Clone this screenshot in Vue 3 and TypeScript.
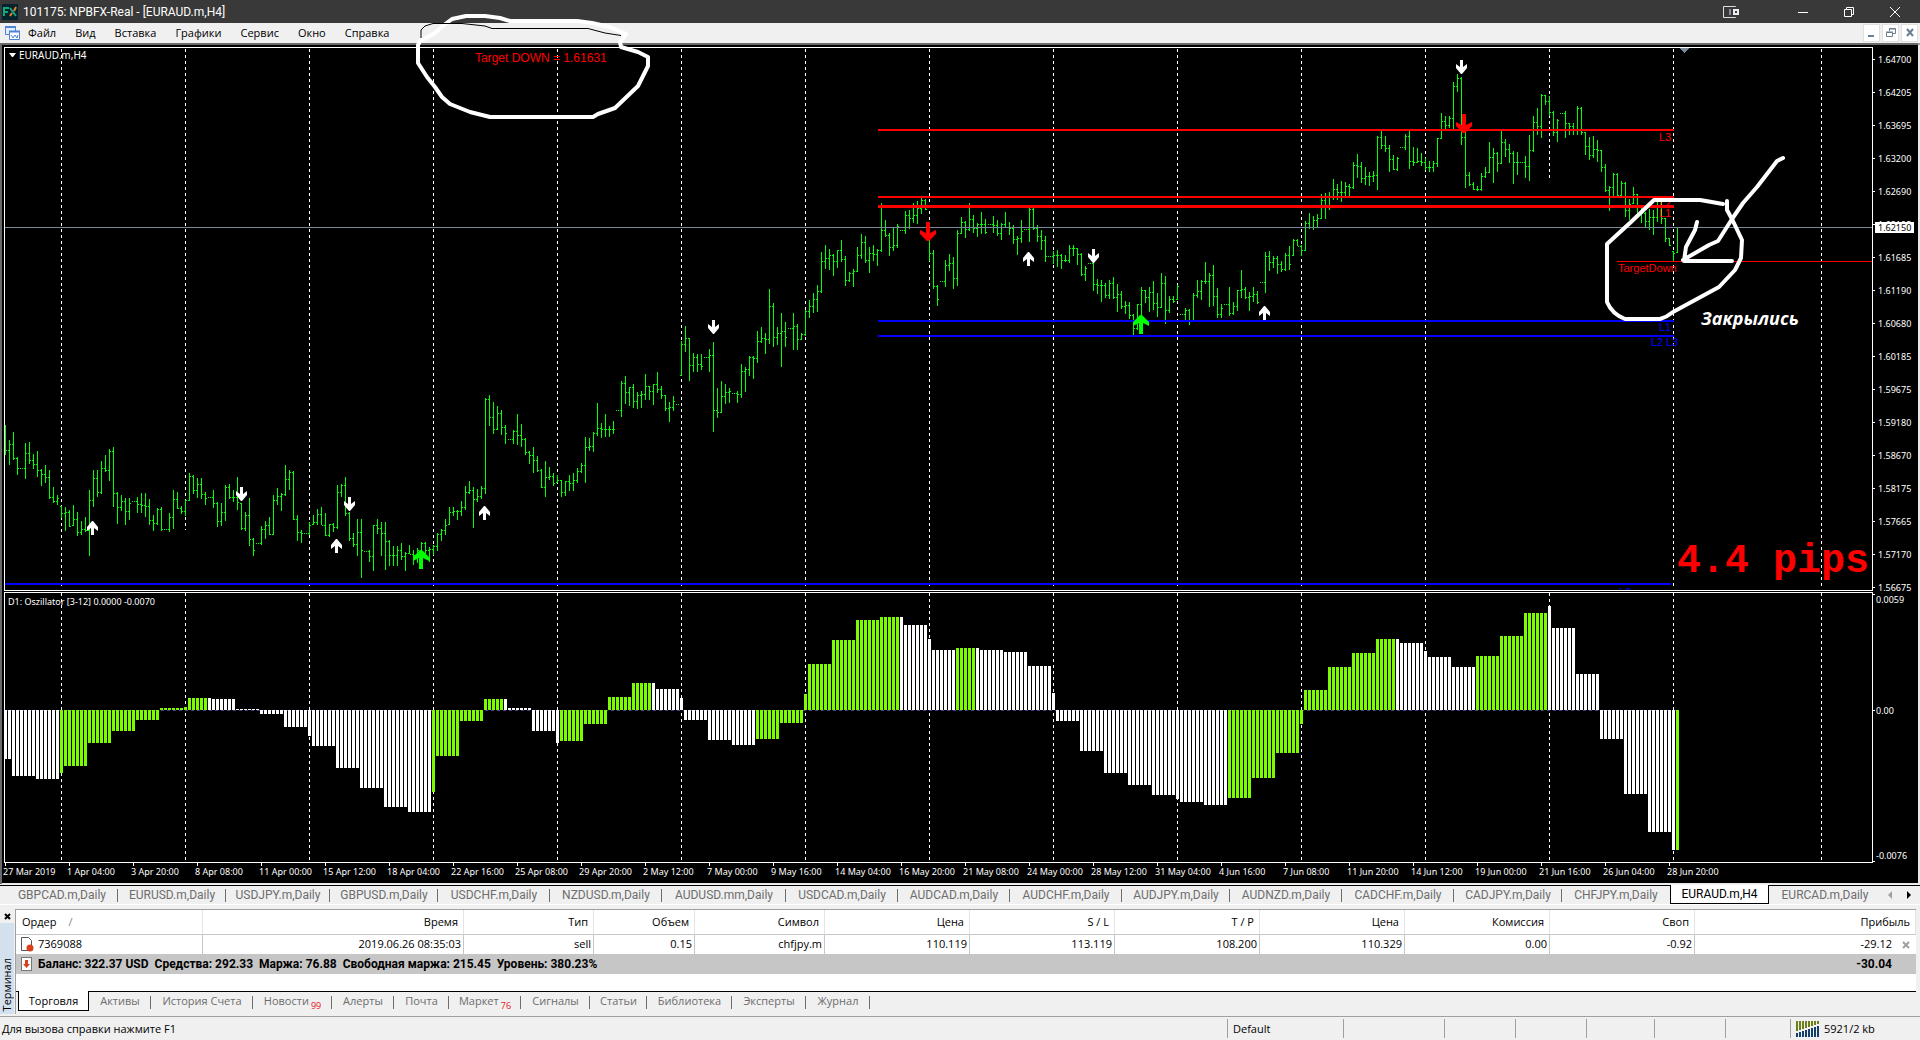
<script setup lang="ts">
interface Block {
  /* first bar index and vertical origin; heights are thirds of a pixel below it */
  start: number
  base: number
  data: string
}

/* bars are "high,low,close" or a single value for a flat bar */
const blocks: Block[] = [
  {
    start: 0,
    base: 400,
    data:
      '75,165,151 121,197,134 96,182,175 172,225,205 205 130,237,160 126,192,182 163,207,192 153,231,211 207,258,222 195,250,232 ' +
      '210,297,292 261,310,303 285,315,295 320,355,340 323,395,337 330,383,378 315,380,358 337,410,397 365,405,387 353,398,392 ' +
      '270,470,301 210,323,236 210,292,277 185,282,205 165,218,211 147,244,155 143,321,280 278,372,322 285,333,303 294,377,333 ' +
      '294,362,309 304 292,340,312 280,340,317 280,353,320 297,375,362 345,395,370 325,375,328 321,393,388 388 ' +
      '340,396,351 272,387,297 278,328,325 320,342,334 300,348,300 219,303,228 225,282,271 234,295,253 234,297,283 278,317,295 ' +
      '292 270,324,310 308,383,363 309,380,338 255,365,262 252,297,292 270,308,292 231,330,308 309,392,385 336,395,345 ' +
      '295,438,418 415,470,451 430 378,435,387 365,417,375 353,407,403 285,405,300 264,315,288 280,333,284 195,289,238 ' +
      '212,272,216 214,360,357 345,423,396 390,429,400 399 368,405,375 345,375,367 327,377,343 321,377,375 339,410,407 ' +
      '372,412,373 370,398,382 255,387,277 252,292,256 231,350,340 337,425,415 401,441,433 357,470,397 359,534,451 453 ' +
      '450,487,470 375,513,377 357,402,385 368,470,400 368,510,423 420,498,467 440,498,465 438,498,450 430,481,470 457,513,461 ' +
      '435,463,463 452,495,465 445,490,450 427,470,430 428,470,452 443,487,447 435,465,440 401,453,404 388,425,392 357,405,376 ' +
      '321,376,338 321,348,335 330,362,335 303,350,321',
  },
  {
    start: 115,
    base: 260,
    data:
      '678,750,697 663,702,691 681,804,717 687,726,709 678,717,685 414,702,418 405,498,472 426,522,508 438,510,460 450,525,502 ' +
      '495,552,520 538 510,552,514 462,555,525 492,561,538 534,585,577 573,612,586 561,639,601 588,636,631 627,684,682 603,711,652 ' +
      '621,660,649 639,678,670 645,669,661 660,711,697 663,708,664 645,693,670 639,693,661 624,669,634 609,639,616 531,669,562 ' +
      '534,573,559 516,576,520 429,528,505 489,534,508 462,531,508 498,531,508 483,522,508 451 363,471,370 348,432,397 ' +
      '381,438,381 372,444,424 396,447,406 393,444,403 342,420,379 378,420,394 372,435,373 336,399,388 378,417,406 405,453,445 ' +
      '426,486,442 408,453,424 433 243,348,253 198,276,235 234,363,316 279,336,292 282,336,313 282,330,319 292 ' +
      '267,336,286 246,516,451 384,474,457 363,459,408 372,432,397 384,429,394 400 393,429,403 312,414,334 321,396,328 ' +
      '288,348,292 288,357,295 213,309,244 201,249,235 219,282,238 87,252,139 129,261,232 201,255,220 159,321,214 186,261,232 ' +
      '205 159,270,199',
  },
  {
    start: 198,
    base: 180,
    data:
      '432,510,478 459,480,462 390,468,393 360,414,380 339,399,358 315,396,335 216,339,244 195,267,235 207,270,227 222,288,244 ' +
      '210,264,211 180,246,238 228,318,301 276,306,280 267,321,274 201,276,226 162,237,187 168,249,241 201,279,220 195,243,223 ' +
      '207,258,211 69,216,151 120,171,166 159,228,202 141,213,196 132,204,138 150 93,162,106 90,147,115 69,129,106 63,132,85 ' +
      '48,102,61 57,90,88 180,243,220 210,327,319 315,378,358 304 240,321,255 222,273,250 231,327,295 150,318,160 111,162,127 ' +
      '123,174,148 69,153,118 105,159,144 129,171,133 96,162,133 117,162,157 133 108,159,135 120,168,160 129,180,133 96,144,142 ' +
      '127,165,144 135,192,178 168,225,175 120,189,153 148 78,186,88 84,150,145 135,186,169 150,210,181 168,246,229 228 ' +
      '213,252,227 210,261,226 222,267,241 225,246,241 195,249,205 195,228,205 204,255,223 219,288,283 258,303,265 250 ' +
      '246,333,313 297,342,316 300,366,316 309,354,346 300,357,310 291,357,352 312,396,343 333,388,379 363,402,376 366,417,406 ' +
      '402,468,445 372,450,373 321,420,331 330,369,352 321,396,337 303,390,370 339,411,382 279,384,310 288,432,391 348,399,358 ' +
      '348,369,364 315,360,319 403 384,426,391 387,435,424 339,426,346 300,354,334 300,360,304 246,312,304 279,381,286 ' +
      '255,378,349 324,414,403 372,414,386 373 321,408,400 366,405,379 330,393,331 270,354,328 321,357,352 336,393,349 ' +
      '321,366,343 333,372,367 307 216,339,229 213,273,247 228,264,235 228,282,253',
  },
  {
    start: 319,
    base: 0,
    data:
      '785,817,808 759,815,765 738,812,793 717,768,720 717,740,738 735,768,750 663,753,670 639,687,682 648,690,660 642,684,654 ' +
      '582,657,600 579,657,592 576,630,588 537,600,568 552,600,577 543,606,577 546,591,559 552,588,562 486,567,495 462,534,499 ' +
      '486,549,535 501,555,529 516,558,529 513,546,526 408,570,411 393,447,435 408,456,445 435,516,478 465,510,508 471,513,475 ' +
      '442 402,450,409 387,507,483 441,498,486 444,490,484 459,498,487 474,510,501 483,516,502 483,516,490 414,501,415 ' +
      '339,417,364 348,387,375 348,386,354 246,387,259 222,276,234 231,435,411 396,564,526 516,558,553 546,570,568 558,573,568 ' +
      '519,573,528 501,534,516 426,519,471 444,549,459 456,516,490 393,492,426 417,471,447 432,489,459 453,552,486 456,525,486 ' +
      '486 468,534,499 405,543,450 348,456,366 324,405,378 282,414,285 285,315,303 288,350,336 333,408,396 357,426,360 340 ' +
      '333,414,370 369,405,378 369,405,387 318,405,325 321,405,396 396,465,438 411,480,466 408,474,448 420,486,451 450,516,502 ' +
      '492,576,571 558,633,562 519,588,523 519,588,586 543,588,550 546,651,631 597,660,612 561,612,583 582,642,621 615,669,640 ' +
      '636,681,664 627,690,651 630,705,652 600,666,615 606,672,655 654,726,716 714,738,736 753,787,760 681,760,682',
  },
]

const barX = (k: number): number => 5 + 4 * k

function buildBars(): string {
  let d = ''
  let prev = 450
  for (const b of blocks) {
    b.data.split(' ').forEach((item, i) => {
      const v = item.split(',').map(n => b.base + Math.floor(Number(n) / 3))
      const x = barX(b.start + i)
      if (v.length === 1) {
        d += `M${x - 1} ${v[0]}h1v1h-1zM${x + 1} ${v[0]}h1v1h-1z`
        prev = v[0]
        return
      }
      const [hi, lo, close] = v
      const open = Math.min(Math.max(prev, hi), lo - 1)
      d += `M${x} ${hi}h1V${lo}h-1zM${x - 1} ${open}h1v1h-1zM${x + 1} ${close}h1v1h-1z`
      prev = close
    })
  }
  return d
}
const barsPath = buildBars()

/* oscillator steps: bar count, colour (w/g), height above zero */
const steps =
  '2w-49 6w-66 6w-69 1g-63 6g-56 6g-33 6g-21 6g-10 6g2 1g3 5g12 1w12 6w11 6w1 6w-4 6w-17 1w-26 6w-36 6w-58 6w-78 6w-97 6w-102 ' +
  '1g-82 6g-46 6g-11 5g11 1w11 6w2 6w-21 1w-33 6g-31 6g-14 6g13 5g27 1w27 6w21 1w12 6w-10 6w-30 6w-35 6g-29 6g-13 1g16 6g46 ' +
  '6g70 6g90 5g93 1w93 6w85 1w71 6w60 5g62 1w62 6w60 6w58 6w44 1w17 6w-11 6w-41 6w-63 6w-75 6w-85 1w-89 6w-92 6w-95 6g-88 ' +
  '6g-68 6g-43 1g-14 6g20 6g43 6g57 5g71 1w71 6w67 1w59 6w53 6w43 6g54 6g74 6g97 1w104 6w82 6w36 6w-29 6w-84 6w-122 1w-140 1g-140'

const osc = { w: '', g: '' }
let cursor = 0
for (const s of steps.split(' ')) {
  const m = /^(\d+)([wg])(-?\d+)$/.exec(s)
  if (!m) continue
  const colour = m[2] as 'w' | 'g'
  for (let i = 0; i < Number(m[1]); i++) {
    osc[colour] += `M${barX(cursor) - 1} 710h3v${-Number(m[3])}h-3z`
    cursor++
  }
}

const separators = [61, 185, 309, 433, 557, 681, 805, 929, 1053, 1177, 1301, 1425, 1549, 1673, 1821]
const sepEnd = (x: number): number => (x === 185 ? 530 : x === 1549 ? 181 : 589)

const prices = [
  '1.64700', '1.64205', '1.63695', '1.63200', '1.62690', '1.62195', '1.61685', '1.61190', '1.60680',
  '1.60185', '1.59675', '1.59180', '1.58670', '1.58175', '1.57665', '1.57170', '1.56675',
].map((label, i) => ({ label, y: 59 + 33 * i }))

const dates = [
  '27 Mar 2019', '1 Apr 04:00', '3 Apr 20:00', '8 Apr 08:00', '11 Apr 00:00', '15 Apr 12:00', '18 Apr 04:00',
  '22 Apr 16:00', '25 Apr 08:00', '29 Apr 20:00', '2 May 12:00', '7 May 00:00', '9 May 16:00', '14 May 04:00',
  '16 May 20:00', '21 May 08:00', '24 May 00:00', '28 May 12:00', '31 May 04:00', '4 Jun 16:00', '7 Jun 08:00',
  '11 Jun 20:00', '14 Jun 12:00', '19 Jun 00:00', '21 Jun 16:00', '26 Jun 04:00', '28 Jun 20:00',
]

const smallDown = '0h3v7l4 -3v4l-5 6h-1l-5 -6v-4l4 3z'
const downs = [[241, 487], [349, 497], [713, 320], [1093, 249], [1461, 60]]
const ups = [[92, 521], [336, 539], [484, 506], [1028, 252], [1264, 306]]
const resist = [
  { y: 130, h: 2 },
  { y: 197, h: 2 },
  { y: 206, h: 3 },
]

const menu = ['Файл', 'Вид', 'Вставка', 'Графики', 'Сервис', 'Окно', 'Справка']

const chartTabs = [
  { name: 'GBPCAD.m,Daily', w: 112 }, { name: 'EURUSD.m,Daily', w: 108 }, { name: 'USDJPY.m,Daily', w: 104 },
  { name: 'GBPUSD.m,Daily', w: 108 }, { name: 'USDCHF.m,Daily', w: 112 }, { name: 'NZDUSD.m,Daily', w: 112 },
  { name: 'AUDUSD.mm,Daily', w: 124 }, { name: 'USDCAD.m,Daily', w: 112 }, { name: 'AUDCAD.m,Daily', w: 112 },
  { name: 'AUDCHF.m,Daily', w: 112 }, { name: 'AUDJPY.m,Daily', w: 108 }, { name: 'AUDNZD.m,Daily', w: 112 },
  { name: 'CADCHF.m,Daily', w: 112 }, { name: 'CADJPY.m,Daily', w: 108 }, { name: 'CHFJPY.m,Daily', w: 108 },
  { name: 'EURAUD.m,H4', w: 99 }, { name: 'EURCAD.m,Daily', w: 112 },
]

const columns = [
  { title: 'Ордер', value: '7369088', w: 187 },
  { title: 'Время', value: '2019.06.26 08:35:03', w: 261 },
  { title: 'Тип', value: 'sell', w: 130 },
  { title: 'Объем', value: '0.15', w: 101 },
  { title: 'Символ', value: 'chfjpy.m', w: 130 },
  { title: 'Цена', value: '110.119', w: 145 },
  { title: 'S / L', value: '113.119', w: 145 },
  { title: 'T / P', value: '108.200', w: 145 },
  { title: 'Цена', value: '110.329', w: 145 },
  { title: 'Комиссия', value: '0.00', w: 145 },
  { title: 'Своп', value: '-0.92', w: 145 },
]

const terminalTabs = [
  { name: 'Торговля', w: 71, badge: '' }, { name: 'Активы', w: 62, badge: '' }, { name: 'История Счета', w: 102, badge: '' },
  { name: 'Новости', w: 79, badge: '99' }, { name: 'Алерты', w: 62, badge: '' }, { name: 'Почта', w: 55, badge: '' },
  { name: 'Маркет', w: 72, badge: '76' }, { name: 'Сигналы', w: 69, badge: '' }, { name: 'Статьи', w: 57, badge: '' },
  { name: 'Библиотека', w: 85, badge: '' }, { name: 'Эксперты', w: 74, badge: '' }, { name: 'Журнал', w: 64, badge: '' },
]
const statusCells = [101, 71, 71, 68, 71, 65]
</script>

<template>
  <div class="app">
    <header class="title">
      <svg class="logo" viewBox="0 0 16 16">
        <rect width="16" height="16" fill="#06222c" />
        <path d="M2 12V4h5M2 8h4M8 4l6 8" stroke="#12a878" stroke-width="2" fill="none" />
        <path d="M14 3l-2 4M8 12l2-3" stroke="#e8822a" stroke-width="2" fill="none" />
      </svg>
      <h1>101175: NPBFX-Real - [EURAUD.m,H4]</h1>
      <div class="winbuttons">
        <button class="wb" aria-label="Экран">
          <svg width="16" height="12" viewBox="0 0 16 12" fill="none">
            <path d="M12.5 1V.5H.5v11h12V11" stroke="#dcdce8" />
            <path d="M7 3v6" stroke="#8a8a96" stroke-width="2" />
            <rect x="11" y="4" width="4" height="4" stroke="#eee" stroke-width="2" />
          </svg>
        </button>
        <button class="wb wide" aria-label="Свернуть"><svg width="10" height="10"><path d="M0 5.5h10" stroke="#fff" /></svg></button>
        <button class="wb" aria-label="Окно">
          <svg width="10" height="10" fill="none" stroke="#fff"><path d="M.5 2.5h7v7h-7zM2.5 2.5v-2h7v7h-2" /></svg>
        </button>
        <button class="wb" aria-label="Закрыть"><svg width="10" height="10"><path d="M0 0l10 10M10 0L0 10" stroke="#fff" /></svg></button>
      </div>
    </header>

    <nav class="menu">
      <svg class="menuicon" width="15" height="14" viewBox="0 0 15 14">
        <path d="M.5.5h10v8H.5z" fill="#e4eefc" stroke="#4f83d1" />
        <path d="M0 1h11" stroke="#4f83d1" stroke-width="2" />
        <path d="M4.500 5.500h10v8h-10z" fill="#fff" stroke="#4f83d1" />
        <path d="M4 5.500h11" stroke="#4f83d1" stroke-width="2" />
        <path d="M6 9l2 3 2-3 2 3 1-3" stroke="#4f83d1" fill="none" />
      </svg>
      <button v-for="m in menu" :key="m" class="menuitem">{{ m }}</button>
      <div class="mdi">
        <button aria-label="Свернуть график"><svg width="10" height="10"><path d="M1 8h6" stroke="#6b7f92" stroke-width="2" /></svg></button>
        <button aria-label="Восстановить график">
          <svg width="10" height="10" fill="none" stroke="#6b7f92"><path d="M3.500 3V.5h6v5H7M3 1h7M.5 4.500h6v4h-6zM0 4h7" /></svg>
        </button>
        <button aria-label="Закрыть график"><svg width="10" height="10"><path d="M2 1l6 7M8 1L2 8" stroke="#6b7f92" stroke-width="2" /></svg></button>
      </div>
    </nav>

    <main class="chart">
      <svg class="plot" viewBox="0 43 1920 841">
        <defs>
          <clipPath id="pricePanel"><rect x="5" y="48" width="1867" height="542" /></clipPath>
        </defs>
        <rect x="0" y="43" width="1920" height="841" fill="#a0a0a0" />
        <path d="M1 884V44H1918" stroke="#696969" fill="none" stroke-width="2" />
        <rect x="2" y="45" width="1916" height="838" fill="#000" />
        <path d="M2 883h1918v1H2zM1918 45h2v839h-2z" fill="#e8e8e8" />

        <g class="crisp">
          <g stroke="#fff" stroke-dasharray="3 3">
            <path v-for="x in separators" :key="x" :d="`M${x}.5 49V${sepEnd(x)}M${x}.5 593V860`" />
          </g>
          <path :d="barsPath" fill="#0f0" />
          <rect x="5" y="227" width="1867" height="1" fill="#778899" />
          <rect v-for="r in resist" :key="r.y" x="878" :y="r.y - 1" width="796" :height="r.h" fill="#f00" />
          <rect x="878" y="320" width="796" height="2" fill="#00f" />
          <rect x="878" y="335" width="796" height="2" fill="#00f" />
          <rect x="5" y="583" width="1666" height="2" fill="#00f" />
          <rect x="1617" y="261" width="255" height="1" fill="#f00" />
          <path d="M1680 48h9l-4 5h-1z" fill="#778899" />

          <path d="M5 710.5H1678" stroke="#483d8b" stroke-dasharray="3 3" />
          <path :d="osc.w" fill="#fff" />
          <path :d="osc.g" fill="#7cfc00" />

          <path d="M4 862.500V592.500H1872M4.500 590V47.500H1872M4 590.500H1872M4 862.500H1873M1872.500 47V591M1872.500 592V863" stroke="#fff" fill="none" />
          <path v-for="(d, i) in dates" :key="d" :d="`M${5 + 64 * i}.5 863v3`" stroke="#fff" />
          <path v-for="p in prices" :key="p.label" :d="`M1873 ${p.y}.5h2`" stroke="#fff" />
          <path d="M1873 594.500h2M1873 710.500h2M1873 861.500h2" stroke="#fff" />
        </g>

        <g fill="#fff">
          <path v-for="a in downs" :key="a[0]" :d="`M${a[0] - 1} ${a[1]}m0 ${smallDown}`" />
          <path v-for="a in ups" :key="a[0]" :transform="`translate(${a[0]} ${a[1]}) scale(1 -1)`" :d="`M-1 -14m0 ${smallDown}`" />
        </g>
        <path v-for="a in [[928, 222], [1464, 114]]" :key="a[0]" :d="`M${a[0] - 2} ${a[1]}h4v11l6 -3v4l-7 7h-2l-7 -7v-4l6 3z`" fill="#f00" />
        <path v-for="a in [[421, 569], [1141, 334]]" :key="a[0]" :d="`M${a[0] - 2} ${a[1]}h4v-11l6 3v-4l-7 -7h-2l-7 7v4l6 -3z`" fill="#0f0" />

        <path d="M9 53h7l-3 4h-1z" fill="#fff" />
        <text class="t10 w" x="19" y="59">EURAUD.m,H4</text>
        <text class="t9 w" x="8" y="605">D1: Oszillator [3-12] 0.0000 -0.0070</text>
        <text class="a12 r" x="475" y="62">Target DOWN = 1.61631</text>
        <text class="a11 r" x="1659" y="141">L3</text>
        <text class="a11 r" x="1659" y="207">L2</text>
        <text class="a11 r" x="1659" y="217">L1</text>
        <text class="a11 r" x="1618" y="272">TargetDown</text>
        <text class="a11 b" x="1659" y="331">L1</text>
        <text class="a11 b" x="1651" y="346">L2</text>
        <text class="a11 b" x="1666" y="346">L3</text>
        <g clip-path="url(#pricePanel)"><text class="a11 b" x="1619" y="596">L2</text></g>
        <text class="pips" x="1677" y="572">4.4 pips</text>
        <text class="note" x="1701" y="325">Закрылись</text>

        <g class="t9 w">
          <text v-for="p in prices" :key="p.label" x="1878" :y="p.y + 4">{{ p.label }}</text>
          <text x="1876" y="603">0.0059</text>
          <text x="1876" y="714">0.00</text>
          <text x="1876" y="859">-0.0076</text>
          <text v-for="(d, i) in dates" :key="d" :x="3 + 64 * i" y="875">{{ d }}</text>
        </g>
        <rect x="1875" y="222" width="39" height="11" fill="#fff" />
        <text class="t9" x="1878" y="231">1.62150</text>

        <g fill="none" stroke="#fff" stroke-width="4" stroke-linejoin="round" stroke-linecap="round">
          <path d="M626 34L610 27L592 23L577 21H510L500 18L485 16H466L452 19L444 25L435 33L420 41L418 45V63L427 77L435 87L442 97L450 104L470 112L490 117H593L598 114L615 108L638 86L648 66V57L638 52L621 47L620 42Z" />
          <path d="M1723 204L1706 201L1700 200H1654L1631 222L1607 244V302Q1612 314 1625 319H1660Q1667 317 1673 312L1719 287L1735 270L1741 258L1742 240L1732 219L1727 210V201" />
          <path d="M1783 158L1777 161L1757 187L1743 203L1732 219L1718 241L1709 245L1683 260M1732 261H1684L1686 247L1695 230L1697 222" />
        </g>
        <path d="M421 38V30L425 26L433 23.500H462L485 26L492 28.500H588L605 33L621 35.500" fill="none" stroke="#000" />
      </svg>
    </main>

    <nav class="charttabs">
      <button v-for="t in chartTabs" :key="t.name" :class="{ active: t.name === 'EURAUD.m,H4' }" :style="{ width: t.w + 'px' }">
        {{ t.name }}
      </button>
      <span class="scroll"><i class="left"></i><i class="right"></i></span>
    </nav>

    <section class="terminal">
      <aside>
        <button class="x" aria-label="Закрыть терминал"><svg width="7" height="7"><path d="M1 1l5 5M6 1L1 6" stroke="#000" stroke-width="2" /></svg></button>
        <div class="side"><span>Терминал</span></div>
      </aside>
      <div class="body">
        <table>
          <colgroup>
            <col v-for="(c, i) in columns" :key="i" :style="{ width: c.w + 'px' }" />
            <col />
          </colgroup>
          <thead>
            <tr>
              <th v-for="(c, i) in columns" :key="i">{{ c.title }}<span v-if="i === 0" class="sort">/</span></th>
              <th>Прибыль</th>
            </tr>
          </thead>
          <tbody>
            <tr class="order">
              <td v-for="(c, i) in columns" :key="i">
                <svg v-if="i === 0" class="doc" width="14" height="16" viewBox="0 0 14 16">
                  <path d="M1.500 1.500h7l3 3v10h-10z" fill="#fff" stroke="#555" />
                  <circle cx="10" cy="12" r="3.500" fill="#d8401a" />
                </svg>{{ c.value }}
              </td>
              <td class="profit">-29.12<svg width="8" height="8"><path d="M1 1l6 6M7 1L1 7" stroke="#a0a0a0" stroke-width="2" /></svg></td>
            </tr>
            <tr class="balance">
              <td colspan="11">
                <svg class="doc" width="14" height="16" viewBox="0 -1 14 16">
                  <rect x="1.500" y=".5" width="10" height="13" fill="#fff" stroke="#777" />
                  <path d="M5 3h3v4h2l-3.500 4L3 7h2z" fill="#d8401a" />
                </svg>Баланс: 322.37 USD&nbsp; Средства: 292.33&nbsp; Маржа: 76.88&nbsp; Свободная маржа: 215.45&nbsp; Уровень: 380.23%
              </td>
              <td class="total">-30.04</td>
            </tr>
          </tbody>
        </table>
        <nav class="termtabs">
          <button v-for="(t, i) in terminalTabs" :key="t.name" :class="{ active: i === 0 }" :style="{ width: t.w + 'px' }">
            {{ t.name }}<sub v-if="t.badge">{{ t.badge }}</sub>
          </button>
        </nav>
      </div>
    </section>

    <footer class="status">
      <span class="help">Для вызова справки нажмите F1</span>
      <span class="cell profile">Default</span>
      <span v-for="(w, i) in statusCells" :key="i" class="cell" :style="{ width: w + 'px' }"></span>
      <span class="cell net">
        <svg width="23" height="16" viewBox="0 0 23 16">
          <path v-for="n in 8" :key="n" :d="`M${n * 3 - 2} 0V${11 - n}`" stroke="#6b7f1c" stroke-width="2" />
          <path v-for="n in 8" :key="n + 10" :d="`M${n * 3 - 2} ${13 - n}V16`" stroke="#143f6b" stroke-width="2" />
        </svg>5921/2 kb
      </span>
    </footer>
  </div>
</template>

<style>
body {
  margin: 0;
  background: #f0f0f0;
}
</style>

<style scoped>
.app {
  font: 11px/16px "Open Sans", "Noto Sans", sans-serif;
  color: #000;
  background: #f0f0f0;
  overflow: hidden;
}
button {
  font: inherit;
  color: inherit;
  border: 0;
  padding: 0;
  margin: 0;
  background: none;
  white-space: nowrap;
}
.title {
  height: 23px;
  background: #393939;
  color: #fff;
  display: flex;
  align-items: center;
}
.logo {
  width: 16px;
  height: 16px;
  margin: 0 5px 0 2px;
}
h1 {
  font: 12px/16px Roboto, sans-serif;
  margin: 0;
}
.winbuttons {
  margin-left: auto;
  display: flex;
  height: 20px;
  margin-right: 2px;
}
.wb {
  width: 46px;
  display: flex;
  align-items: center;
  justify-content: center;
}
.wb.wide {
  margin-left: 26px;
}
.menu {
  height: 20px;
  display: flex;
  align-items: center;
  background: #f0f0f0;
}
.menuicon {
  margin: 0 0 0 5px;
}
.menuitem {
  padding: 0 11px 0 8px;
}
.mdi {
  margin-left: auto;
  display: flex;
  gap: 2px;
  margin-right: 2px;
}
.mdi button {
  width: 17px;
  height: 18px;
  background: #fff;
  border: 1px solid #e0e0e0;
  display: flex;
  align-items: center;
  justify-content: center;
}
.chart {
  position: relative;
}
.plot {
  display: block;
  width: 100%;
  height: auto;
  overflow: visible;
}
.crisp {
  shape-rendering: crispEdges;
}
.t9 {
  font: 9px "Noto Sans", sans-serif;
}
.t10 {
  font: 10px "Noto Sans", sans-serif;
}
.a11 {
  font: 11px "Liberation Sans", Arial, sans-serif;
}
.a12 {
  font: 12px "Liberation Sans", Arial, sans-serif;
}
.pips {
  font: bold 40px "Liberation Mono", "Courier New", monospace;
  fill: #f00;
}
.note {
  font: italic bold 18px "Open Sans", sans-serif;
  fill: #fff;
}
.w {
  fill: #fff;
}
.r {
  fill: #f00;
}
.b {
  fill: #00f;
}
.charttabs {
  display: flex;
  height: 20px;
  margin-top: 1px;
  padding-left: 6px;
  border-top: 1px solid #000;
  border-bottom: 1px solid #fff;
  box-sizing: border-box;
  font: 12px/18px Roboto, "Open Sans", sans-serif;
  color: #6d6d6d;
}
.charttabs button {
  position: relative;
  flex: none;
}
.charttabs button::after,
.termtabs button::after {
  content: "";
  position: absolute;
  right: 0;
  top: 3px;
  height: 13px;
  width: 1px;
  background: #6d6d6d;
}
.charttabs button.active {
  background: #fff;
  color: #000;
  border: 1px solid #000;
  border-top: 0;
  margin-top: -1px;
}
.charttabs button.active::after,
.charttabs button:nth-child(15)::after,
.charttabs button:nth-child(17)::after {
  display: none;
}
.scroll {
  display: flex;
  align-items: center;
  gap: 15px;
  margin-left: auto;
  padding-right: 9px;
}
.scroll i {
  border: 4px solid transparent;
}
.scroll .left {
  border-left-width: 0;
  border-right-color: #a0a0a0;
}
.scroll .right {
  border-right-width: 0;
  border-left-color: #000;
}
.terminal {
  display: flex;
  margin-top: 4px;
}
aside {
  width: 15px;
  display: flex;
  flex-direction: column;
}
.x {
  height: 14px;
  line-height: 0;
}
.side {
  flex: 1;
  margin-right: 1px;
  background: #d3e1ef;
  display: flex;
  align-items: flex-end;
}
.side span {
  writing-mode: vertical-rl;
  transform: rotate(180deg);
  line-height: 14px;
  padding-top: 3px;
}
.body {
  flex: 1;
  min-width: 0;
  margin-right: 4px;
  border-top: 1px solid #a0a0a0;
  border-left: 1px solid #a0a0a0;
}
table {
  width: 100%;
  table-layout: fixed;
  border-collapse: separate;
  border-spacing: 0;
  background: #fff;
}
th,
td {
  font-weight: normal;
  text-align: right;
  white-space: nowrap;
  box-sizing: border-box;
  padding: 0 5px 0 4px;
}
th {
  height: 25px;
  padding-bottom: 1px;
  border-right: 1px solid #e3e3e3;
  border-bottom: 1px solid #c6c6c6;
}
th:first-child {
  text-align: left;
  padding-left: 6px;
}
.sort {
  color: #888;
  margin-left: 12px;
}
td {
  height: 19px;
  padding-right: 2px;
  padding-bottom: 2px;
}
.order td {
  border-right: 1px solid #c6c6c6;
}
td:first-child {
  text-align: left;
}
.doc {
  vertical-align: top;
  margin-right: 4px;
}
.order td.profit {
  border-right: 0;
  padding-right: 6px;
}
.profit svg {
  margin-left: 10px;
  vertical-align: middle;
}
.balance td {
  height: 20px;
  padding-bottom: 0;
  background: #c6c6c6;
  font: bold 12px/16px Roboto, sans-serif;
}
.balance .total {
  padding-right: 24px;
}
.termtabs {
  display: flex;
  border-top: 17px solid #fff;
  background: linear-gradient(#000, #000) 0 0 / 100% 1px no-repeat;
  height: 40px;
  box-sizing: border-box;
  color: #6d6d6d;
  padding-left: 2px;
}
.termtabs button {
  position: relative;
  line-height: 18px;
  height: 20px;
}
.termtabs button::after {
  top: 5px;
}
.termtabs button.active {
  background: #fff;
  color: #000;
  border: 1px solid #000;
  border-top: 0;
}
.termtabs button.active::after {
  display: none;
}
sub {
  color: #e81123;
  font-size: 9px;
  line-height: 0;
  vertical-align: -4px;
  margin-left: 2px;
}
.status {
  border-top: 1px solid #a0a0a0;
  margin-top: 2px;
  height: 24px;
  box-sizing: border-box;
  display: flex;
  align-items: center;
}
.help {
  flex: 1;
  padding-left: 2px;
}
.cell {
  height: 19px;
  line-height: 19px;
  box-sizing: border-box;
  border-left: 1px solid #a0a0a0;
  flex: none;
}
.profile {
  width: 116px;
  padding-left: 5px;
}
.net {
  width: 130px;
  padding-left: 5px;
  display: flex;
  align-items: center;
  gap: 5px;
}
</style>
